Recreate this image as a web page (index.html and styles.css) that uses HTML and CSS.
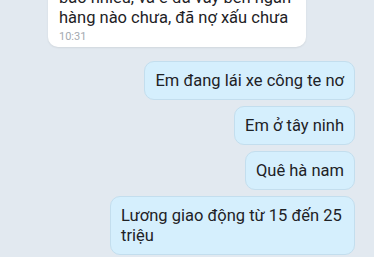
FILE: index.html
```html
<!DOCTYPE html>
<html>
<head>
  <meta charset="UTF-8">
  <link rel="stylesheet" href="styles.css">
  <title>Tin nhắn</title>
</head>
<body>
  <div class="chat">
    <div class="msg msg-in">
      <div class="bubble bubble-in">
        <div class="text">bao nhiêu, và e đã vay bên ngân<br>hàng nào chưa, đã nợ xấu chưa</div>
        <div class="time">10:31</div>
      </div>
    </div>

    <div class="msg msg-out">
      <div class="bubble bubble-out">Em đang lái xe công te nơ</div>
    </div>
    <div class="msg msg-out">
      <div class="bubble bubble-out">Em ở tây ninh</div>
    </div>
    <div class="msg msg-out">
      <div class="bubble bubble-out">Quê hà nam</div>
    </div>
    <div class="msg msg-out">
      <div class="bubble bubble-out">Lương giao động từ 15 đến 25 triệu</div>
    </div>
  </div>
</body>
</html>
```

FILE: styles.css
```css
body {
  margin: 0;
  background: #e2e9f0;
  font-family: Roboto, "Noto Sans", sans-serif;
  color: #1e2226;
  overflow: hidden;
}

.chat {
  display: flex;
  flex-direction: column;
  gap: 6px;
  margin-top: -22px;
  padding: 0 19px 0 48px;
}

.msg {
  display: flex;
}

.msg-in {
  justify-content: flex-start;
  margin-bottom: 8px;
}

.msg-out {
  justify-content: flex-end;
}

.bubble {
  font-size: 16.5px;
  line-height: 20px;
  border-radius: 10px;
  padding: 10px 11px 9px;
}

.bubble-in {
  width: 258px;
  box-sizing: border-box;
  background: #fff;
  box-shadow: 0 1px 2px rgba(0, 0, 0, 0.08);
  padding-bottom: 4px;
  white-space: nowrap;
}

.time {
  font-size: 11px;
  line-height: 12px;
  color: #a3a9b0;
  margin-top: 3px;
}

.bubble-out {
  max-width: 245px;
  box-sizing: border-box;
  background: #d5effd;
  border: 1px solid #c3deee;
  padding: 9px 10px 8px;
}
```
